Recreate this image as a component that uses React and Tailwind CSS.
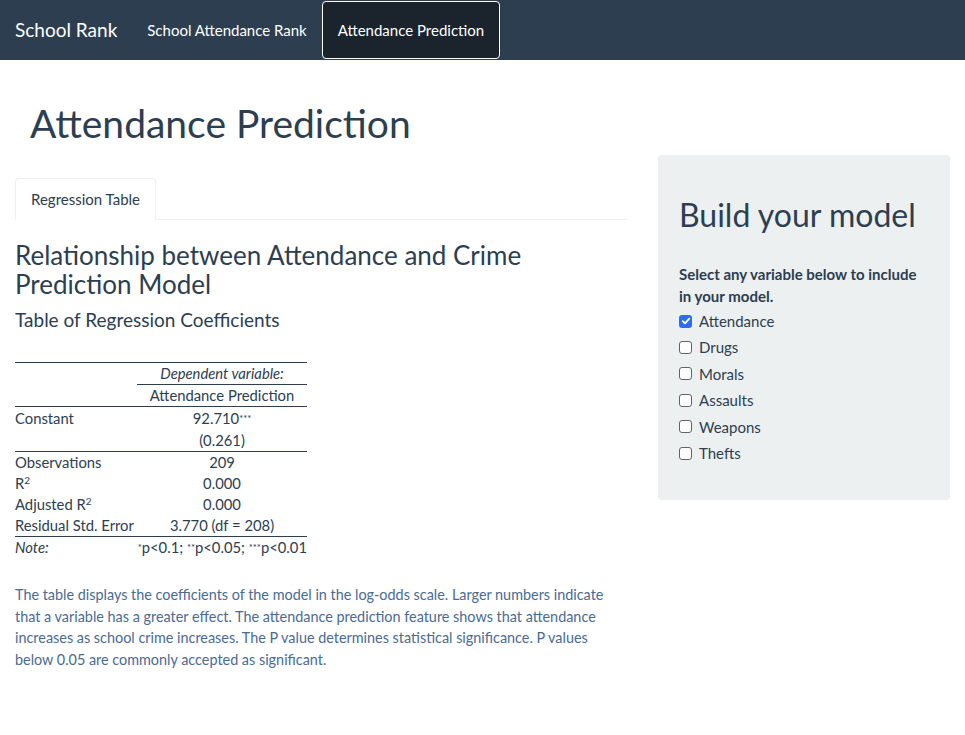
import React from "react";

const variables = [
    { name: "Attendance", checked: true },
    { name: "Drugs", checked: false },
    { name: "Morals", checked: false },
    { name: "Assaults", checked: false },
    { name: "Weapons", checked: false },
    { name: "Thefts", checked: false },
];

const Stars = ({ n }) => (
    <sup className="text-[9.5px] relative -top-[2px]">{"*".repeat(n)}</sup>
);

const Checkbox = ({ checked }) =>
    checked ? (
        <span className="w-[13px] h-[13px] rounded-[3px] bg-[#2f6cf5] flex items-center justify-center">
            <svg width="10" height="10" viewBox="0 0 10 10">
                <path d="M1.8 5.2 L4 7.4 L8.3 2.6" stroke="#fff" strokeWidth="1.8" fill="none" strokeLinecap="round" strokeLinejoin="round" />
            </svg>
        </span>
    ) : (
        <span className="w-[13px] h-[13px] rounded-[3px] border border-[#5f6368] bg-white" />
    );

const RegressionTable = () => (
    <table className="text-[14.8px] leading-[21px] text-[#2c3e50] border-collapse w-[292px]">
        <tbody>
            <tr className="border-t border-[#2c3e50]">
                <td className="w-[122px]"></td>
                <td className="text-center italic border-b border-[#2c3e50]">Dependent variable:</td>
            </tr>
            <tr className="border-b border-[#2c3e50]">
                <td></td>
                <td className="text-center">Attendance Prediction</td>
            </tr>
            <tr className="h-[23px]">
                <td>Constant</td>
                <td className="text-center">92.710<Stars n={3} /></td>
            </tr>
            <tr className="h-[22px] border-b border-[#2c3e50]">
                <td></td>
                <td className="text-center">(0.261)</td>
            </tr>
            <tr>
                <td>Observations</td>
                <td className="text-center">209</td>
            </tr>
            <tr>
                <td>R<sup className="text-[10px]">2</sup></td>
                <td className="text-center">0.000</td>
            </tr>
            <tr>
                <td>Adjusted R<sup className="text-[10px]">2</sup></td>
                <td className="text-center">0.000</td>
            </tr>
            <tr className="border-b border-[#2c3e50]">
                <td className="whitespace-nowrap pr-[2px]">Residual Std. Error</td>
                <td className="text-center whitespace-nowrap">3.770 (df = 208)</td>
            </tr>
            <tr>
                <td className="italic">Note:</td>
                <td className="text-right whitespace-nowrap">
                    <Stars n={1} />p&lt;0.1; <Stars n={2} />p&lt;0.05; <Stars n={3} />p&lt;0.01
                </td>
            </tr>
        </tbody>
    </table>
);

export default function App() {
    return (
        <div className="min-h-[735px] bg-white text-[#2c3e50] font-['Lato','Open_Sans',sans-serif]">
            <nav className="h-[60px] bg-[#2c3e50] flex items-center text-white">
                <span className="px-[15px] text-[19px]">School Rank</span>
                <span className="px-[15px] text-[15px]">School Attendance Rank</span>
                <span className="h-[58px] px-[15px] flex items-center text-[15px] bg-[#1b232d] border border-white rounded-[4px]">
                    Attendance Prediction
                </span>
            </nav>

            <h1 className="pl-[30px] mt-[42px] text-[39px] leading-[43px]">Attendance Prediction</h1>

            <div className="flex mt-[10px]">
                <div className="w-[643px] px-[15px]">
                    <div className="mt-[23px] flex border-b border-[#ecf0f1]">
                        <span className="px-[15px] h-[42px] flex items-center text-[15px] border border-b-0 border-[#ecf0f1] rounded-t-[4px] -mb-px bg-white">
                            Regression Table
                        </span>
                    </div>

                    <h3 className="mt-[21px] text-[26px] leading-[29px]">
                        Relationship between Attendance and Crime Prediction Model
                    </h3>
                    <h4 className="mt-[10px] text-[19px] leading-[21px]">Table of Regression Coefficients</h4>

                    <div className="mt-[32px]">
                        <RegressionTable />
                    </div>

                    <p className="mt-[26px] text-[14.4px] leading-[21.7px] text-[#4a6b94] w-[613px]">
                        The table displays the coefficients of the model in the log-odds scale. Larger numbers indicate that a variable has a greater effect. The attendance prediction feature shows that attendance increases as school crime increases. The P value determines statistical significance. P values below 0.05 are commonly accepted as significant.
                    </p>
                </div>

                <div className="w-[322px] px-[15px]">
                    <div className="bg-[#ecf0f1] rounded-[4px] px-[21px] pt-[42px] pb-[34px] w-[292px]">
                        <h2 className="text-[32px] leading-[35px]">Build your model</h2>
                        <p className="mt-[31px] text-[15px] font-bold leading-[22px]">
                            Select any variable below to include in your model.
                        </p>
                        <div className="mt-[1px] flex flex-col">
                            {variables.map((v) => (
                                <label key={v.name} className="flex items-center gap-[7px] h-[26.4px] text-[15px]">
                                    <Checkbox checked={v.checked} />
                                    {v.name}
                                </label>
                            ))}
                        </div>
                    </div>
                </div>
            </div>
        </div>
    );
}
